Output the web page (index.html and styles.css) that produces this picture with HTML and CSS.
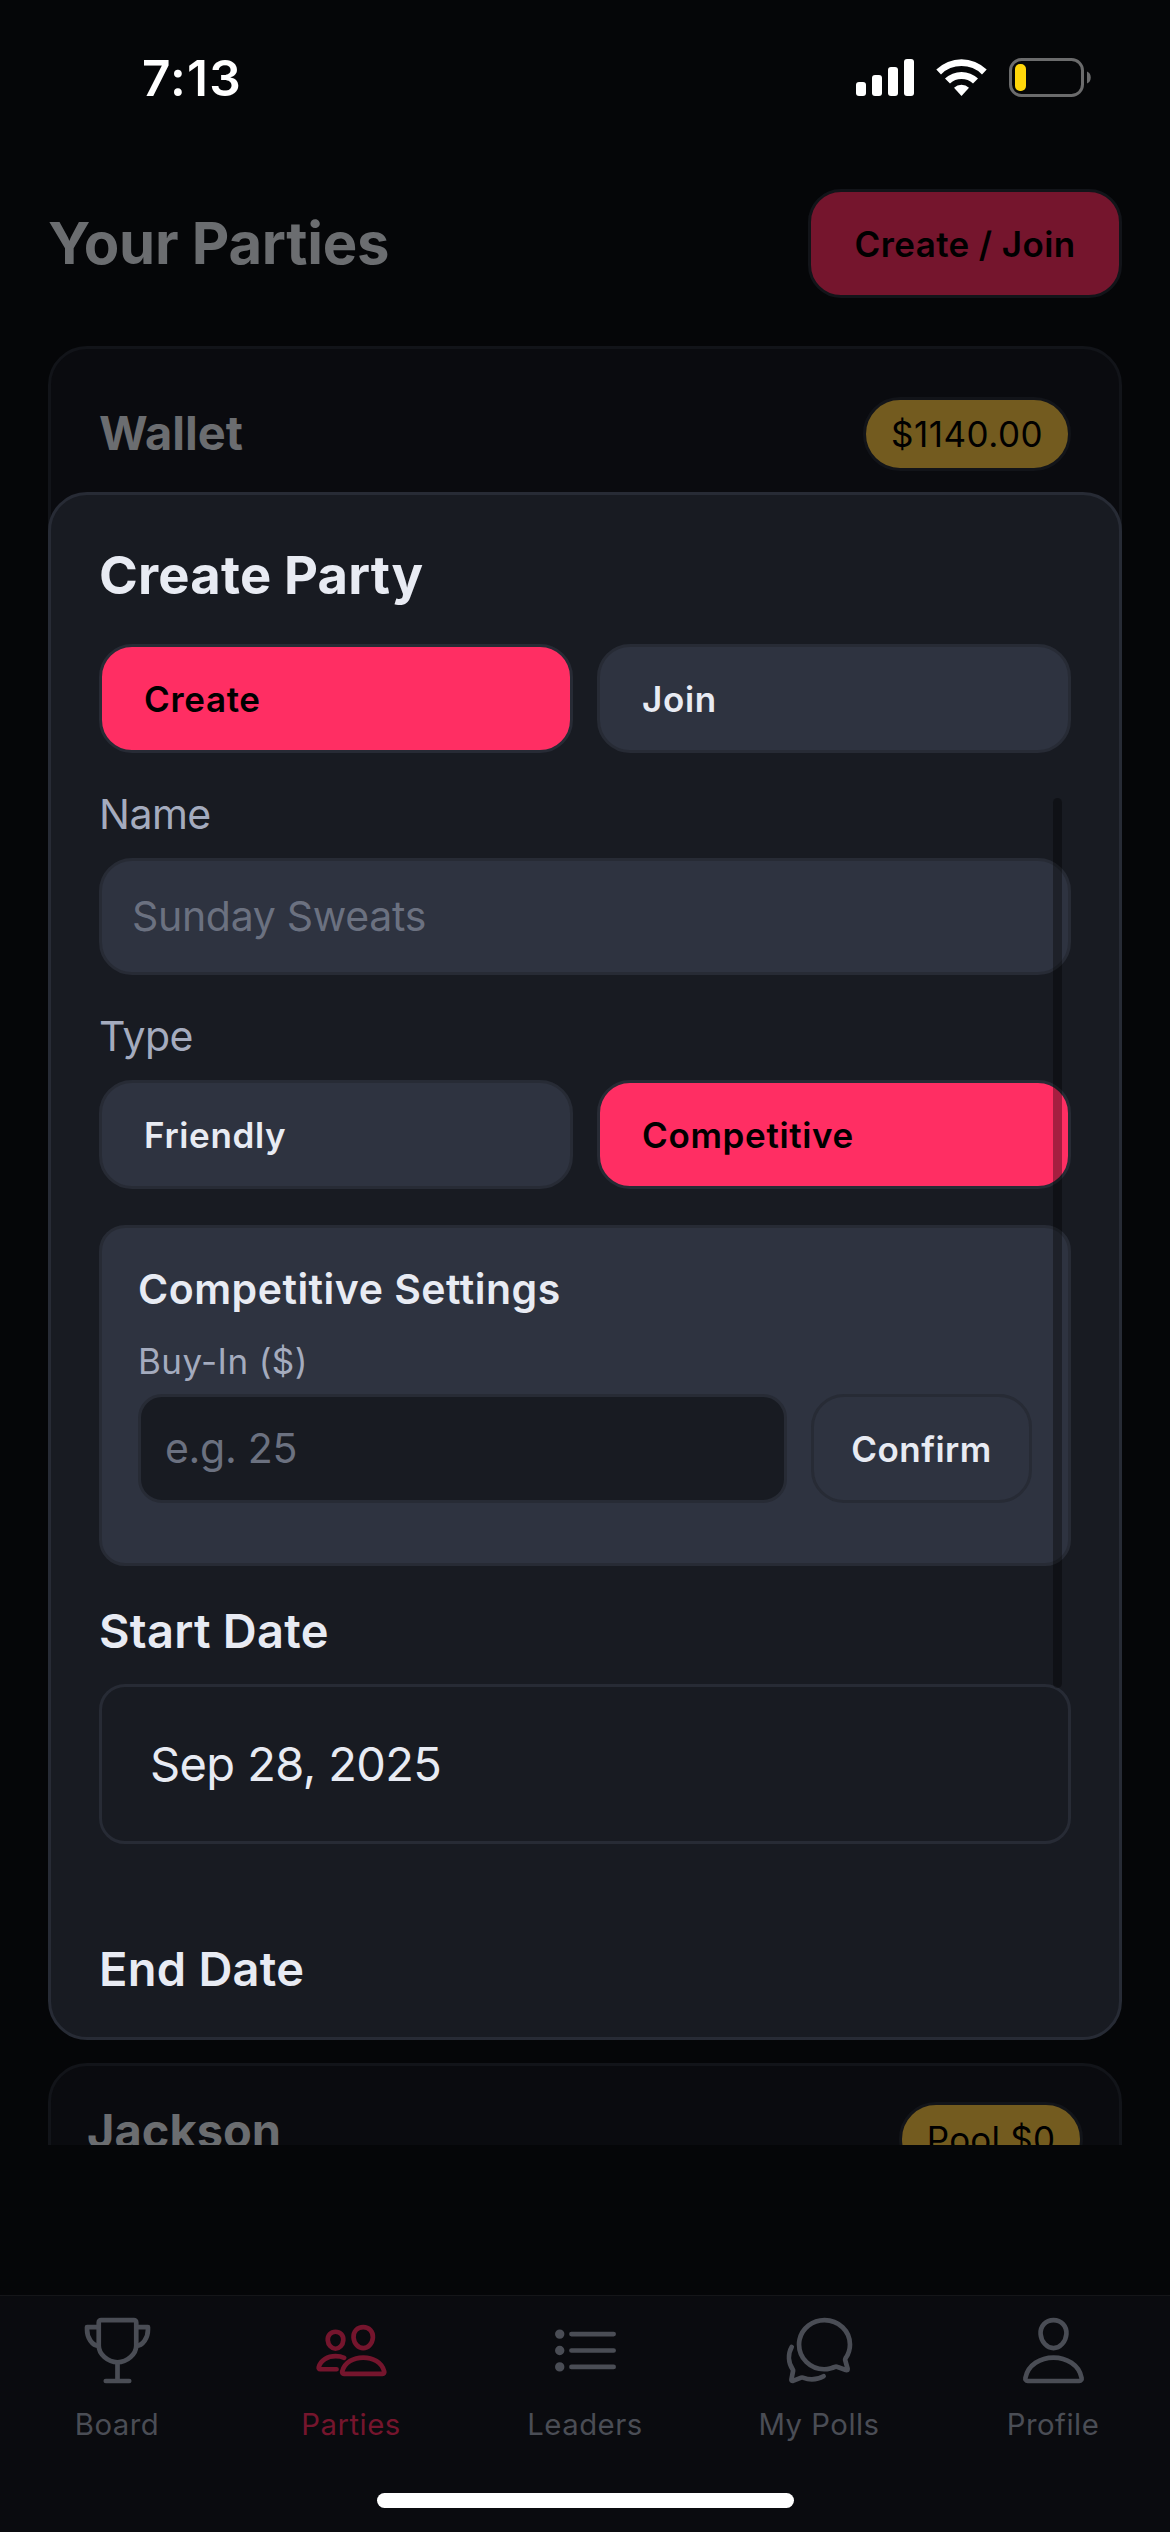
FILE: index.html
```html
<!DOCTYPE html>
<html lang="en">
<head>
<meta charset="utf-8">
<title>Your Parties</title>
<link rel="stylesheet" href="styles.css">
</head>
<body>
<div class="screen">
  <header class="status">
    <span class="status-time">7:13</span>
    <svg class="status-icons" width="240" height="42" viewBox="0 0 240 42">
      <g fill="#fff">
        <rect x="1" y="24" width="10" height="14" rx="3"/>
        <rect x="17" y="17" width="10" height="21" rx="3"/>
        <rect x="33" y="9" width="10" height="29" rx="3"/>
        <rect x="49" y="1" width="10" height="37" rx="3"/>
        <path d="M81.300 11.500A36 36 0 0 1 131.700 11.500L127 16.400A29 29 0 0 0 86 16.400Z"/>
        <path d="M90 20.500A24 24 0 0 1 123 20.500L118 25.500A17 17 0 0 0 95 25.500Z"/>
        <path d="M99 29.800A11 11 0 0 1 114 29.800L106.500 38Z"/>
      </g>
      <rect x="155.500" y="1.500" width="72" height="36" rx="11" fill="none" stroke="#6b6b6c" stroke-width="3"/>
      <path d="M232 13.500c5 1.500 5 10.500 0 12z" fill="#6b6b6c"/>
      <rect x="160" y="6" width="11" height="27" rx="5" fill="#ffd60a"/>
    </svg>
  </header>

  <main class="page">
    <div class="page-head">
      <h1 class="page-title">Your Parties</h1>
      <button class="btn-dim">Create / Join</button>
    </div>
    <section class="card wallet">
      <h2 class="card-title">Wallet</h2>
      <span class="pill pill-wallet">$1140.00</span>
    </section>
    <section class="card party">
      <h2 class="card-title">Jackson</h2>
      <span class="pill pill-pool">Pool $0</span>
    </section>
  </main>

  <nav class="tabs">
    <a class="tab">
      <svg class="tab-icon" viewBox="0 0 512 512">
        <path d="M176 464h160M256 464V336"/>
        <path d="M144 48h224a16 16 0 0 1 16 16v160c0 55.500-60 112-128 112S128 279.500 128 224V64a16 16 0 0 1 16-16z"/>
        <path d="M128 96H48v16c0 55.220 33.550 112 80 112M384 96h80v16c0 55.220-33.550 112-80 112"/>
      </svg>
      <span>Board</span>
    </a>
    <a class="tab tab-on">
      <svg class="tab-icon" viewBox="0 0 512 512">
        <path d="M402 168c-2.930 40.670-33.100 72-66 72s-63.120-31.320-66-72c-3-42.310 26.370-72 66-72s69 30.460 66 72z"/>
        <path d="M336 304c-65.170 0-127.840 32.370-143.540 95.410-2.080 8.340 3.150 16.590 11.720 16.590h263.650c8.570 0 13.770-8.250 11.720-16.590C463.850 335.360 401.180 304 336 304z"/>
        <path d="M200 185.940c-2.340 32.480-26.720 58.060-53 58.060s-50.700-25.570-53-58.060C91.610 152.150 115.340 128 147 128s55.390 24.770 53 57.940z"/>
        <path d="M206 306c-18.050-8.270-37.930-11.450-59-11.450-52 0-102.100 25.850-114.650 76.200-1.650 6.660 2.530 13.250 9.370 13.250H154"/>
      </svg>
      <span>Parties</span>
    </a>
    <a class="tab">
      <svg class="tab-icon" viewBox="0 0 512 512">
        <path d="M160 144h288M160 256h288M160 368h288"/>
        <circle cx="80" cy="144" r="16"/><circle cx="80" cy="256" r="16"/><circle cx="80" cy="368" r="16"/>
      </svg>
      <span>Leaders</span>
    </a>
    <a class="tab">
      <svg class="tab-icon" viewBox="0 0 512 512">
        <path d="M431 320.600c-1-3.600 1.200-8.600 3.300-12.200a33.680 33.680 0 0 1 2.100-3.100A162 162 0 0 0 464 215c.300-92.200-77.500-167-173.700-167-83.900 0-153.900 57.100-170.300 132.900a160.700 160.700 0 0 0-3.700 34.200c0 92.300 74.800 169.100 171 169.100 15.300 0 35.900-4.600 47.200-7.700s22.500-7.200 25.400-8.300a26.440 26.440 0 0 1 9.300-1.700 26 26 0 0 1 10.100 2l56.700 20.100a13.520 13.520 0 0 0 3.900 1 8 8 0 0 0 8-8 12.850 12.850 0 0 0-.500-2.700z"/>
        <path d="M66.460 232a146.230 146.230 0 0 0 6.390 152.670c2.310 3.490 3.610 6.190 3.210 8s-11.930 61.870-11.930 61.870a8 8 0 0 0 2.710 7.680A8.170 8.170 0 0 0 72 464a7.260 7.260 0 0 0 2.910-.600l56.210-22a15.700 15.700 0 0 1 12 .200c18.940 7.380 39.880 12 60.830 12A159.210 159.210 0 0 0 284 432.110"/>
      </svg>
      <span>My Polls</span>
    </a>
    <a class="tab">
      <svg class="tab-icon" viewBox="0 0 512 512">
        <path d="M344 144c-3.920 52.870-44 96-88 96s-84.150-43.120-88-96c-4-55 35-96 88-96s92 42 88 96z"/>
        <path d="M256 304c-87 0-175.300 48-191.640 138.600C62.390 453.520 68.570 464 80 464h352c11.440 0 17.620-10.480 15.650-21.400C431.300 352 343 304 256 304z"/>
      </svg>
      <span>Profile</span>
    </a>
  </nav>
  <div class="home-bar"></div>

  <div class="modal">
    <h2 class="modal-title">Create Party</h2>
    <div class="choice-row">
      <button class="choice choice-on">Create</button>
      <button class="choice">Join</button>
    </div>
    <div class="form">
      <label class="label">Name</label>
      <div class="input">Sunday Sweats</div>
      <label class="label">Type</label>
      <div class="choice-row">
        <button class="choice">Friendly</button>
        <button class="choice choice-on">Competitive</button>
      </div>
      <section class="settings">
        <h3 class="settings-title">Competitive Settings</h3>
        <label class="label-small">Buy-In ($)</label>
        <div class="buyin">
          <div class="buyin-input">e.g. 25</div>
          <button class="confirm">Confirm</button>
        </div>
      </section>
      <h3 class="date-title">Start Date</h3>
      <div class="date">Sep 28, 2025</div>
      <h3 class="date-title date-end">End Date</h3>
      <div class="scrollbar"></div>
    </div>
  </div>
</div>
</body>
</html>
```
FILE: styles.css
```css
* { box-sizing: border-box; margin: 0; }
body { background: #050608; font-family: Inter, "Liberation Sans", sans-serif; }
.screen { position: relative; width: 1170px; height: 2532px; overflow: hidden; background: #050608; }
button { font: inherit; }

.status { height: 141px; display: flex; justify-content: space-between; padding: 58px 75px 0 142px; color: #fff; }
.status-time { font-size: 49.5px; font-weight: 600; line-height: 40px; letter-spacing: 1.2px; }

.page { height: 2004px; padding: 48px 48px 0; overflow: hidden; display: flex; flex-direction: column; }
.page-head { display: flex; justify-content: space-between; align-items: center; height: 109px; flex: none; }
.page-title { font-size: 58px; font-weight: 700; letter-spacing: -.25px; padding-bottom: 2px; color: #6b6d70; }
.btn-dim { width: 314px; height: 109px; border: 3px solid #121419; border-radius: 33px; background: #75152d; color: #000; font-size: 35px; font-weight: 600; letter-spacing: .4px; }
.card { border: 3px solid #121419; border-radius: 39px; background: #0a0b0f; display: flex; justify-content: space-between; align-items: flex-start; flex: none; }
.wallet { margin-top: 48px; height: 1669px; padding: 48px; }
.party { margin-top: 48px; height: 200px; padding: 36px; }
.card-title { font-size: 47px; font-weight: 700; line-height: 72px; color: #6b6d70; }
.party .card-title { line-height: 57px; }
.pill { height: 74px; border: 3px solid #121419; border-radius: 37px; background: #735b1f; color: #000; font-size: 35px; letter-spacing: .5px; line-height: 68px; text-align: center; }
.pill-wallet { width: 208px; }
.pill-pool { width: 184px; letter-spacing: .2px; }

.tabs { height: 237px; margin-top: 150px; border-top: 1px solid #151619; background: #0a0b0f; display: flex; }
.tab { flex: 1; display: flex; flex-direction: column; align-items: center; gap: 19px; padding-top: 17px; color: #4a4d55; font-size: 29.3px; line-height: 36px; letter-spacing: .5px; }
.tab-on { color: #75152d; }
.tab-icon { width: 75px; height: 75px; fill: none; stroke: currentColor; stroke-width: 32; stroke-linecap: round; stroke-linejoin: round; }
.home-bar { position: absolute; left: 377px; top: 2493px; width: 417px; height: 15px; border-radius: 8px; background: #fff; }

.modal { position: absolute; left: 48px; top: 492px; width: 1074px; height: 1548px; border: 3px solid #272b35; border-radius: 39px; background: #181b22; padding: 48px; color: #e8ebf3; }
.modal-title { font-size: 52.5px; font-weight: 700; line-height: 65px; letter-spacing: .2px; }
.choice-row { display: grid; grid-template-columns: 1fr 1fr; gap: 24px; }
.modal-title + .choice-row { margin-top: 36px; }
.choice { height: 109px; border: 3px solid #272b35; border-radius: 33px; background: #2e3340; color: #e8ebf3; padding: 0 42px; text-align: left; font-size: 35px; font-weight: 600; letter-spacing: .65px; }
.choice-on { background: #ff2e63; color: #000; }

.form { position: relative; display: flow-root; }
.label { display: block; font-size: 41px; line-height: 50px; letter-spacing: -.5px; color: #a4abbe; margin-top: 36px; }
.input { height: 117px; margin-top: 19px; border: 3px solid #272b35; border-radius: 33px; background: #2e3340; color: #6b7180; font-size: 41px; letter-spacing: -.3px; line-height: 111px; padding: 0 30px; }
.form .choice-row { margin-top: 19px; }
.settings { margin-top: 36px; height: 341px; border: 3px solid #272b35; border-radius: 26px; background: #2e3340; padding: 36px; }
.settings-title { font-size: 41px; font-weight: 600; line-height: 50px; letter-spacing: .5px; }
.label-small { display: block; font-size: 35px; line-height: 46px; letter-spacing: .4px; margin-top: 24px; color: #a4abbe; }
.buyin { display: flex; gap: 24px; margin-top: 10px; }
.buyin-input { flex: 1; height: 109px; border: 3px solid #272b35; border-radius: 24px; background: #181b22; color: #6b7180; font-size: 41px; letter-spacing: -.3px; line-height: 103px; padding: 0 24px; }
.confirm { width: 221px; height: 109px; border: 3px solid #272b35; border-radius: 33px; background: #2e3340; color: #e8ebf3; font-size: 35px; font-weight: 600; letter-spacing: .5px; }
.date-title { font-size: 47px; font-weight: 600; line-height: 58px; letter-spacing: .25px; margin-top: 36px; }
.date { height: 160px; margin-top: 24px; border: 3px solid #272b35; border-radius: 26px; font-size: 47px; letter-spacing: -.6px; line-height: 154px; padding: 0 48px; }
.date-end { margin-top: 96px; }
.scrollbar { position: absolute; left: 954px; top: 45px; width: 9px; height: 890px; border-radius: 5px; background: rgba(0, 0, 0, .35); }
```
